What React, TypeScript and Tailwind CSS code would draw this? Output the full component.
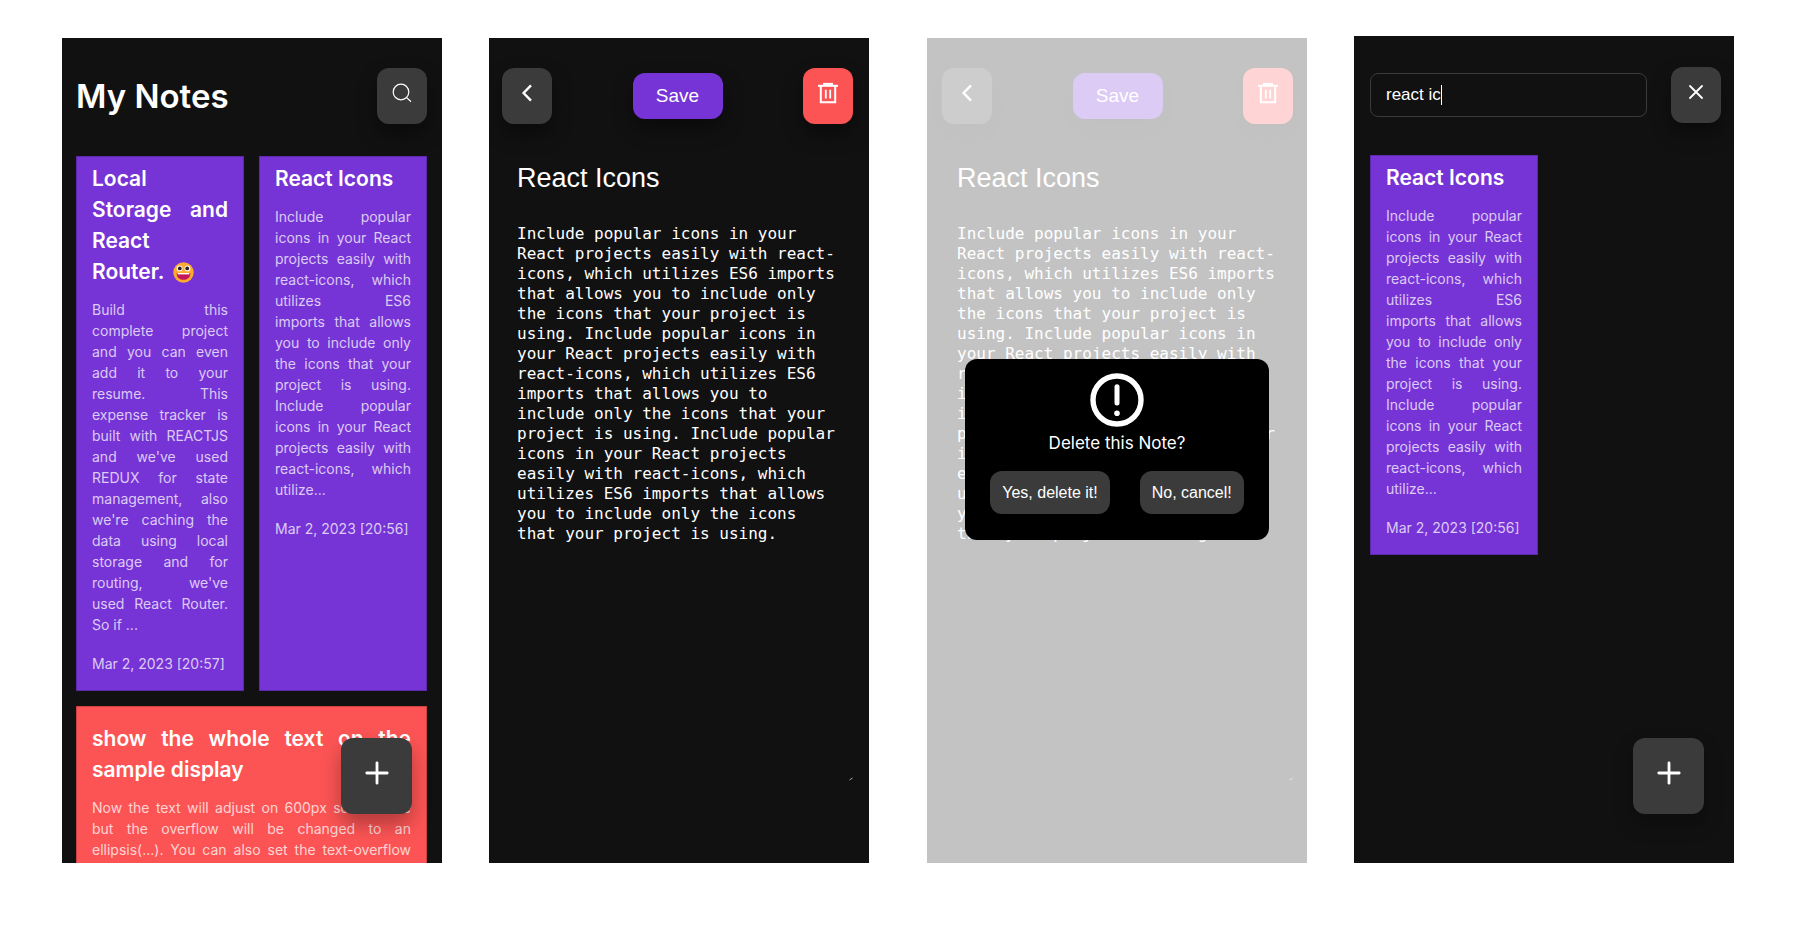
import { ReactNode } from "react";

const sans = "font-['Inter',sans-serif]";
const arial = "font-['Liberation_Sans',Arial,sans-serif]";

const iconLines = [
  "Include popular",
  "icons in your React",
  "projects easily with",
  "react-icons, which",
  "utilizes ES6",
  "imports that allows",
  "you to include only",
  "the icons that your",
  "project is using.",
  "Include popular",
  "icons in your React",
  "projects easily with",
  "react-icons, which",
  "utilize...",
];

const storageLines = [
  "Build this",
  "complete project",
  "and you can even",
  "add it to your",
  "resume. This",
  "expense tracker is",
  "built with REACTJS",
  "and we've used",
  "REDUX for state",
  "management, also",
  "we're caching the",
  "data using local",
  "storage and for",
  "routing, we've",
  "used React Router.",
  "So if ...",
];

const displayLines = [
  "Now the text will adjust on 600px screen size",
  "but the overflow will be changed to an",
  "ellipsis(...). You can also set the text-overflow",
];

const noteText = [
  "Include popular icons in your",
  "React projects easily with react-",
  "icons, which utilizes ES6 imports",
  "that allows you to include only",
  "the icons that your project is",
  "using. Include popular icons in",
  "your React projects easily with",
  "react-icons, which utilizes ES6",
  "imports that allows you to",
  "include only the icons that your",
  "project is using. Include popular",
  "icons in your React projects",
  "easily with react-icons, which",
  "utilizes ES6 imports that allows",
  "you to include only the icons",
  "that your project is using.",
].join("\n");

function SearchIcon() {
  return (
    <svg className="size-5" viewBox="0 0 20 20" fill="none" stroke="currentColor" strokeWidth="1.2" strokeLinecap="round" aria-hidden="true">
      <circle cx="9" cy="9" r="7.8" />
      <path d="M14.6 14.6 L18.6 18.3" />
    </svg>
  );
}

function BackIcon() {
  return (
    <svg className="size-5" viewBox="0 0 20 20" fill="none" stroke="currentColor" strokeWidth="2.4" aria-hidden="true">
      <path d="M14 2.4 L6.6 10 L14 17.6" />
    </svg>
  );
}

function TrashIcon() {
  return (
    <svg className="size-6" viewBox="0 0 24 24" fill="none" stroke="currentColor" strokeWidth="2" aria-hidden="true">
      <path d="M2 4.8 H22" />
      <path d="M7 2.9 H17" />
      <path d="M4.8 5 V21.3 H19.2 V5" />
      <path d="M9.8 8.8 V17.4 M14.2 8.8 V17.4" strokeWidth="1.8" />
    </svg>
  );
}

function CloseIcon() {
  return (
    <svg className="size-5" viewBox="0 0 20 20" fill="none" stroke="currentColor" strokeWidth="1.8" strokeLinecap="round" aria-hidden="true">
      <path d="M4 4 L16 16 M16 4 L4 16" />
    </svg>
  );
}

function PlusIcon() {
  return (
    <svg className="size-6" viewBox="0 0 24 24" fill="none" stroke="currentColor" strokeWidth="2.8" strokeLinecap="round" aria-hidden="true">
      <path d="M12 1.8 V22.2 M1.8 12 H22.2" />
    </svg>
  );
}

function AlertIcon() {
  return (
    <svg className="size-[54px]" viewBox="0 0 54 54" fill="none" stroke="currentColor" aria-hidden="true">
      <circle cx="27" cy="27" r="24" strokeWidth="5.4" />
      <path d="M27 13.8 V30" strokeWidth="5" strokeLinecap="round" />
      <circle cx="27" cy="40.3" r="2.8" fill="currentColor" stroke="none" />
    </svg>
  );
}

function GrinIcon() {
  return (
    <svg className="ml-1 inline-block size-[21px] align-[-4px]" viewBox="0 0 21 21" role="img" aria-label="grinning face">
      <circle cx="10.5" cy="10.5" r="10.2" fill="#fdab2e" />
      <circle cx="6.6" cy="6.4" r="2.9" fill="#fff" />
      <circle cx="14.4" cy="6.4" r="2.9" fill="#fff" />
      <circle cx="6.8" cy="6.4" r="1.9" fill="#2a2030" />
      <circle cx="14.2" cy="6.4" r="1.9" fill="#2a2030" />
      <path d="M3.6 11 H17.4 C17.4 15.6 14.4 17.8 10.5 17.8 C6.6 17.8 3.6 15.6 3.6 11 Z" fill="#c2185b" />
      <path d="M4.6 11 H16.4 V12.4 H4.6 Z" fill="#fff" />
    </svg>
  );
}

function IconButton({ label, red = false, children }: { label: string; red?: boolean; children: ReactNode }) {
  const color = red ? "bg-[#fc5454]" : "bg-[#3b3b3b]";
  return (
    <button
      type="button"
      aria-label={label}
      className={`${color} flex h-14 w-[50px] shrink-0 items-center justify-center rounded-xl pb-1.5 text-white shadow-[0_10px_20px_rgba(0,0,0,0.4)]`}
    >
      {children}
    </button>
  );
}

function AddButton() {
  return (
    <button
      type="button"
      aria-label="Add note"
      className="absolute right-[30px] bottom-[49px] flex h-[76px] w-[71px] items-center justify-center rounded-xl bg-[#3b3b3b] pb-1.5 text-white shadow-[0_10px_20px_rgba(0,0,0,0.3)]"
    >
      <PlusIcon />
    </button>
  );
}

function Justified({ lines, full = false }: { lines: ReactNode[]; full?: boolean }) {
  return (
    <>
      {lines.map((line, i) => (
        <span
          key={i}
          className={`block whitespace-nowrap ${full || i < lines.length - 1 ? "[text-align-last:justify]" : ""}`}
        >
          {line}{" "}
        </span>
      ))}
    </>
  );
}

function NoteCard({ title, body, date, className }: { title: ReactNode[]; body: string[]; date?: string; className: string }) {
  return (
    <article className={`${className} flex flex-col border border-black/20 px-[15px] pb-4 text-white`}>
      <h2 className="text-[21px] leading-[31px] font-semibold">
        <Justified lines={title} />
      </h2>
      <p className="mt-3 text-sm leading-[21px] text-white/75">
        <Justified lines={body} full={!date} />
      </p>
      {date && <time className="mt-[18px] text-sm leading-[21px] text-white/75">{date}</time>}
    </article>
  );
}

function ReactIconsCard() {
  return <NoteCard className="bg-[#7633d6] pt-1.5" title={["React Icons"]} body={iconLines} date="Mar 2, 2023 [20:56]" />;
}

function Editor({ className }: { className: string }) {
  return (
    <div className={`${className} ${arial} flex h-full flex-col pt-[30px] text-white`}>
      <header className="flex items-center justify-between">
        <IconButton label="Back"><BackIcon /></IconButton>
        <button type="button" className="h-[46px] w-[90px] rounded-xl bg-[#7633d6] text-[19px] shadow-[0_10px_20px_rgba(0,0,0,0.4)]">
          Save
        </button>
        <IconButton label="Delete note" red><TrashIcon /></IconButton>
      </header>
      <form className="flex grow flex-col pb-20">
        <input
          aria-label="Title"
          defaultValue="React Icons"
          className="mt-8 h-11 bg-transparent px-[15px] text-[27px] outline-none"
        />
        <div className="relative mt-6 flex grow">
          <textarea
            aria-label="Note"
            defaultValue={noteText}
            className="w-full resize-none bg-transparent pl-[15px] font-['DejaVu_Sans_Mono',monospace] text-base leading-[20px] outline-none"
          />
          <svg className="absolute right-0 bottom-0.5 size-1" viewBox="0 0 4 4" stroke="#aaa" aria-hidden="true">
            <path d="M0.5 3 L3.5 1" />
          </svg>
        </div>
      </form>
    </div>
  );
}

function Screen({ label, className = "", children }: { label: string; className?: string; children: ReactNode }) {
  return (
    <section aria-label={label} className={`${className} relative min-w-0 flex-1 overflow-hidden bg-[#111]`}>
      {children}
    </section>
  );
}

export default function App() {
  return (
    <main className={`${sans} flex h-screen gap-[47px] bg-white pt-[38px] pr-[65px] pb-[62px] pl-[62px]`}>
      <Screen label="Notes">
        <div className="pt-[30px] pr-[15px] pl-3.5">
          <header className="flex items-center justify-between">
            <h1 className="text-[33px] leading-[56px] font-semibold text-white">My Notes</h1>
            <IconButton label="Search notes"><SearchIcon /></IconButton>
          </header>
          <div className="mt-8 grid grid-cols-2 gap-[15px]">
            <NoteCard
              className="bg-[#7633d6] pt-1.5"
              title={["Local", "Storage and", "React", <>Router. <GrinIcon /></>]}
              body={storageLines}
              date="Mar 2, 2023 [20:57]"
            />
            <ReactIconsCard />
            <NoteCard
              className="col-span-2 bg-[#fc5454] pt-4"
              title={["show the whole text on the", "sample display"]}
              body={displayLines}
            />
          </div>
        </div>
        <AddButton />
      </Screen>

      <Screen label="Edit note">
        <Editor className="pr-4 pl-[13px]" />
      </Screen>

      <Screen label="Delete note" className="ml-[11px]">
        <Editor className="pr-3.5 pl-[15px]" />
        <div className="absolute inset-0 bg-white/75" />
        <div
          role="dialog"
          aria-label="Delete this Note?"
          className="absolute inset-x-[38px] top-[321px] flex flex-col items-center rounded-xl bg-black pt-3.5 pb-[26px] text-white"
        >
          <AlertIcon />
          <p className="mt-1 text-[17px] leading-6">Delete this Note?</p>
          <div className={`${arial} mt-4 flex gap-[30px]`}>
            <button type="button" className="h-[43px] rounded-xl bg-[#3b3b3b] px-3">Yes, delete it!</button>
            <button type="button" className="h-[43px] rounded-xl bg-[#3b3b3b] px-3">No, cancel!</button>
          </div>
        </div>
      </Screen>

      <Screen label="Search notes" className="-mt-0.5">
        <div className="pt-[31px] pr-[13px] pl-4">
          <header className="flex items-center gap-6">
            <div className={`${arial} relative grow`}>
              <input
                aria-label="Search notes"
                defaultValue="react ic"
                className="h-11 w-full rounded-lg border border-[#3b3b3b] bg-transparent px-[15px] text-[17px] text-white outline-none"
              />
              <span className="absolute top-3 left-[71px] h-5 w-px bg-white" />
            </div>
            <IconButton label="Close search"><CloseIcon /></IconButton>
          </header>
          <div className="mt-8 grid grid-cols-2 gap-[15px]">
            <ReactIconsCard />
          </div>
        </div>
        <AddButton />
      </Screen>
    </main>
  );
}
